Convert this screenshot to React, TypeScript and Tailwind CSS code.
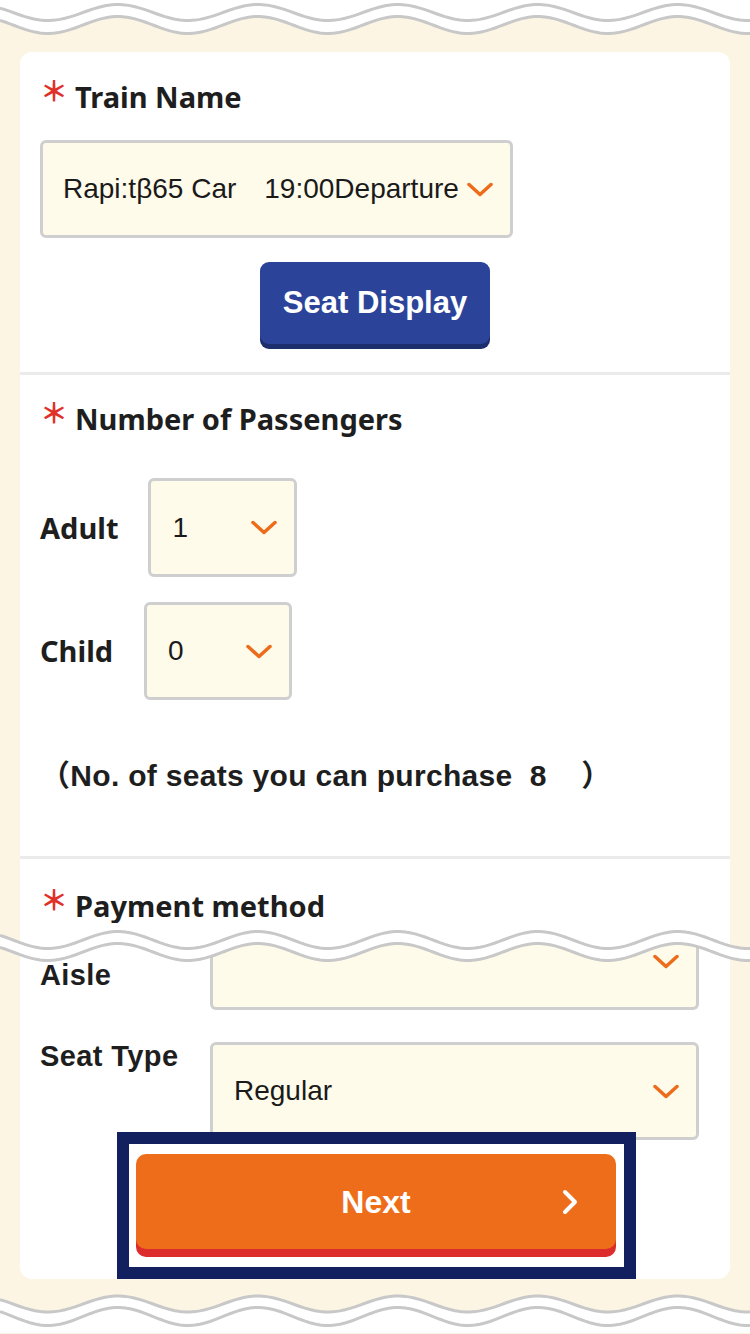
import React from 'react';

const PHASE = 538;
const WAVELEN = 140;
const GRAY = '#c8c8c8';
const CREAM = '#fcf5e3';

function wavePoints(cy: number, amp: number, from: number, to: number) {
  const pts: string[] = [];
  for (let x = from; x <= to; x += 5) {
    const y = cy - amp * Math.cos((2 * Math.PI * (x - PHASE)) / WAVELEN);
    pts.push(`${x},${y.toFixed(2)}`);
  }
  return pts;
}

const line = (pts: string[]) => 'M' + pts.join(' L');
const back = (pts: string[]) => [...pts].reverse().join(' L');

function TopWave() {
  const l1 = wavePoints(12.5, 8, 0, 750);
  const l2 = wavePoints(25, 8.5, 0, 750);
  return (
    <svg width="750" height="52" className="block">
      <rect width="750" height="52" fill={CREAM} />
      <path d={`M0,0 L750,0 L${back(l2)} Z`} fill="#fff" />
      <path d={line(l1)} fill="none" stroke={GRAY} strokeWidth="3" />
      <path d={line(l2)} fill="none" stroke={GRAY} strokeWidth="3" />
    </svg>
  );
}

function MidWave() {
  const l1 = wavePoints(17, 8.5, 0, 750);
  const l1card = wavePoints(17, 8.5, 20, 730);
  const l2 = wavePoints(29, 8.5, 0, 750);
  return (
    <svg width="750" height="42" className="block">
      <path d={`M0,0 L750,0 L${back(l1)} Z`} fill={CREAM} />
      <path d={`M20,0 L730,0 L${back(l1card)} Z`} fill="#fff" />
      <path d={`${line(l1)} L${back(l2)} Z`} fill="#fff" />
      <path d={line(l1)} fill="none" stroke={GRAY} strokeWidth="3" />
      <path d={line(l2)} fill="none" stroke={GRAY} strokeWidth="3" />
    </svg>
  );
}

function BottomWave() {
  const l1 = wavePoints(25, 8, 0, 750);
  const l2 = wavePoints(37.5, 9, 0, 750);
  return (
    <svg width="750" height="54" className="block">
      <rect width="750" height="54" fill={CREAM} />
      <path d={`${line(l1)} L750,54 L0,54 Z`} fill="#fff" />
      <path d={line(l1)} fill="none" stroke={GRAY} strokeWidth="3" />
      <path d={line(l2)} fill="none" stroke={GRAY} strokeWidth="3" />
    </svg>
  );
}

function Chevron() {
  return (
    <svg width="26" height="15" viewBox="0 0 26 15" className="shrink-0">
      <polyline points="2,2.5 13,12.5 24,2.5" fill="none" stroke="#ec6c1b" strokeWidth="3.5" strokeLinecap="round" strokeLinejoin="round" />
    </svg>
  );
}

function Heading({ children }: { children: React.ReactNode }) {
  return (
    <div className="flex h-[40px] items-center gap-[7px]">
      <span className="mb-[14px] w-[28px] text-center font-['Noto_Sans_CJK_JP',sans-serif] text-[28px] font-bold leading-none text-[#e0302a]">＊</span>
      <h2 className="text-[29px] font-bold leading-[40px]">{children}</h2>
    </div>
  );
}

function Select({ value, className }: { value: string; className: string }) {
  return (
    <div className={`flex items-center justify-between rounded-[6px] border-[3px] border-[#cfcfcf] bg-[#fefbea] pl-[21px] pr-[17px] ${className}`}>
      <span className="whitespace-nowrap font-['Liberation_Sans','Noto_Sans_CJK_JP',sans-serif] text-[28px] text-[#1a1a1a]">{value}</span>
      <Chevron />
    </div>
  );
}

export default function App() {
  const label = "font-['Liberation_Sans',sans-serif] text-[29px] font-bold leading-[28px] tracking-[0.4px]";

  return (
    <div className="min-h-[1334px] w-[750px] bg-[#fcf5e3] font-['Noto_Sans',sans-serif] text-[#1e1e1e]">
      <TopWave />

      <div className="mx-[20px] rounded-[12px] bg-white">
        {/* train */}
        <section className="px-[20px] pt-[25px] pb-[28px]">
          <Heading>Train Name</Heading>
          <Select value="Rapi:tβ65 Car　19:00Departure" className="mt-[23px] h-[98px] w-[473px] !pl-[20px]" />
          <div className="mt-[24px] flex justify-center">
            <button className="h-[82px] w-[230px] rounded-[9px] bg-[#2b4499] font-['Liberation_Sans',sans-serif] text-[31px] font-bold text-white shadow-[0_5px_0_#1c2e6c]">
              Seat Display
            </button>
          </div>
        </section>

        <div className="h-[3px] bg-[#ebebeb]" />

        {/* passengers */}
        <section className="px-[20px] pt-[24px] pb-[60px]">
          <Heading>Number of Passengers</Heading>
          <div className="mt-[39px] flex items-center gap-[30px]">
            <span className="text-[29px] font-bold">Adult</span>
            <Select value="1" className="h-[99px] w-[149px]" />
          </div>
          <div className="mt-[25px] flex items-center gap-[31px]">
            <span className="text-[29px] font-bold">Child</span>
            <Select value="0" className="h-[98px] w-[148px]" />
          </div>
          <p className="mt-[56px] h-[40px] whitespace-pre font-['Liberation_Sans','Noto_Sans_CJK_JP',sans-serif] text-[30px] font-bold leading-[40px] tracking-[0.3px]">
            {'（No. of seats you can purchase\u00a0\u00a08\u00a0\u00a0\u00a0\u00a0）'}
          </p>
        </section>

        <div className="h-[3px] bg-[#ebebeb]" />

        {/* payment / seat */}
        <div className="px-[20px] pt-[27px]">
          <Heading>Payment method</Heading>
        </div>
        <div className="relative z-10 -mx-[20px] -mt-[3px] h-[42px]">
          <MidWave />
        </div>
        <div className="relative -mt-[36px] px-[20px]">
          <div className="flex">
            <span className={`mt-[32px] w-[170px] ${label}`}>Aisle</span>
            <div className="flex h-[81px] w-[489px] items-start justify-end rounded-b-[6px] border-x-[3px] border-b-[3px] border-[#cfcfcf] bg-[#fefbea] pt-[25px] pr-[17px]">
              <Chevron />
            </div>
          </div>
          <div className="mt-[32px] flex">
            <span className={`w-[170px] ${label}`}>Seat Type</span>
            <Select value="Regular" className="h-[98px] w-[489px]" />
          </div>

          <div className="relative z-10 -mt-[8px] ml-[77px] w-[519px] border-[12px] border-[#132060] bg-white px-[7px] pt-[10px] pb-[18px]">
            <button className="relative flex h-[95px] w-[480px] items-center justify-center rounded-[10px] bg-[#ee6d1a] font-['Liberation_Sans',sans-serif] text-[32px] font-bold text-white shadow-[0_8px_0_#dc2c2c]">
              Next
              <svg width="18" height="28" viewBox="0 0 18 28" className="absolute right-[37px] top-1/2 -translate-y-1/2">
                <polyline points="4,4 14,14 4,24" fill="none" stroke="#fff" strokeWidth="4" strokeLinecap="round" strokeLinejoin="round" />
              </svg>
            </button>
          </div>
        </div>
      </div>

      <BottomWave />
    </div>
  );
}
